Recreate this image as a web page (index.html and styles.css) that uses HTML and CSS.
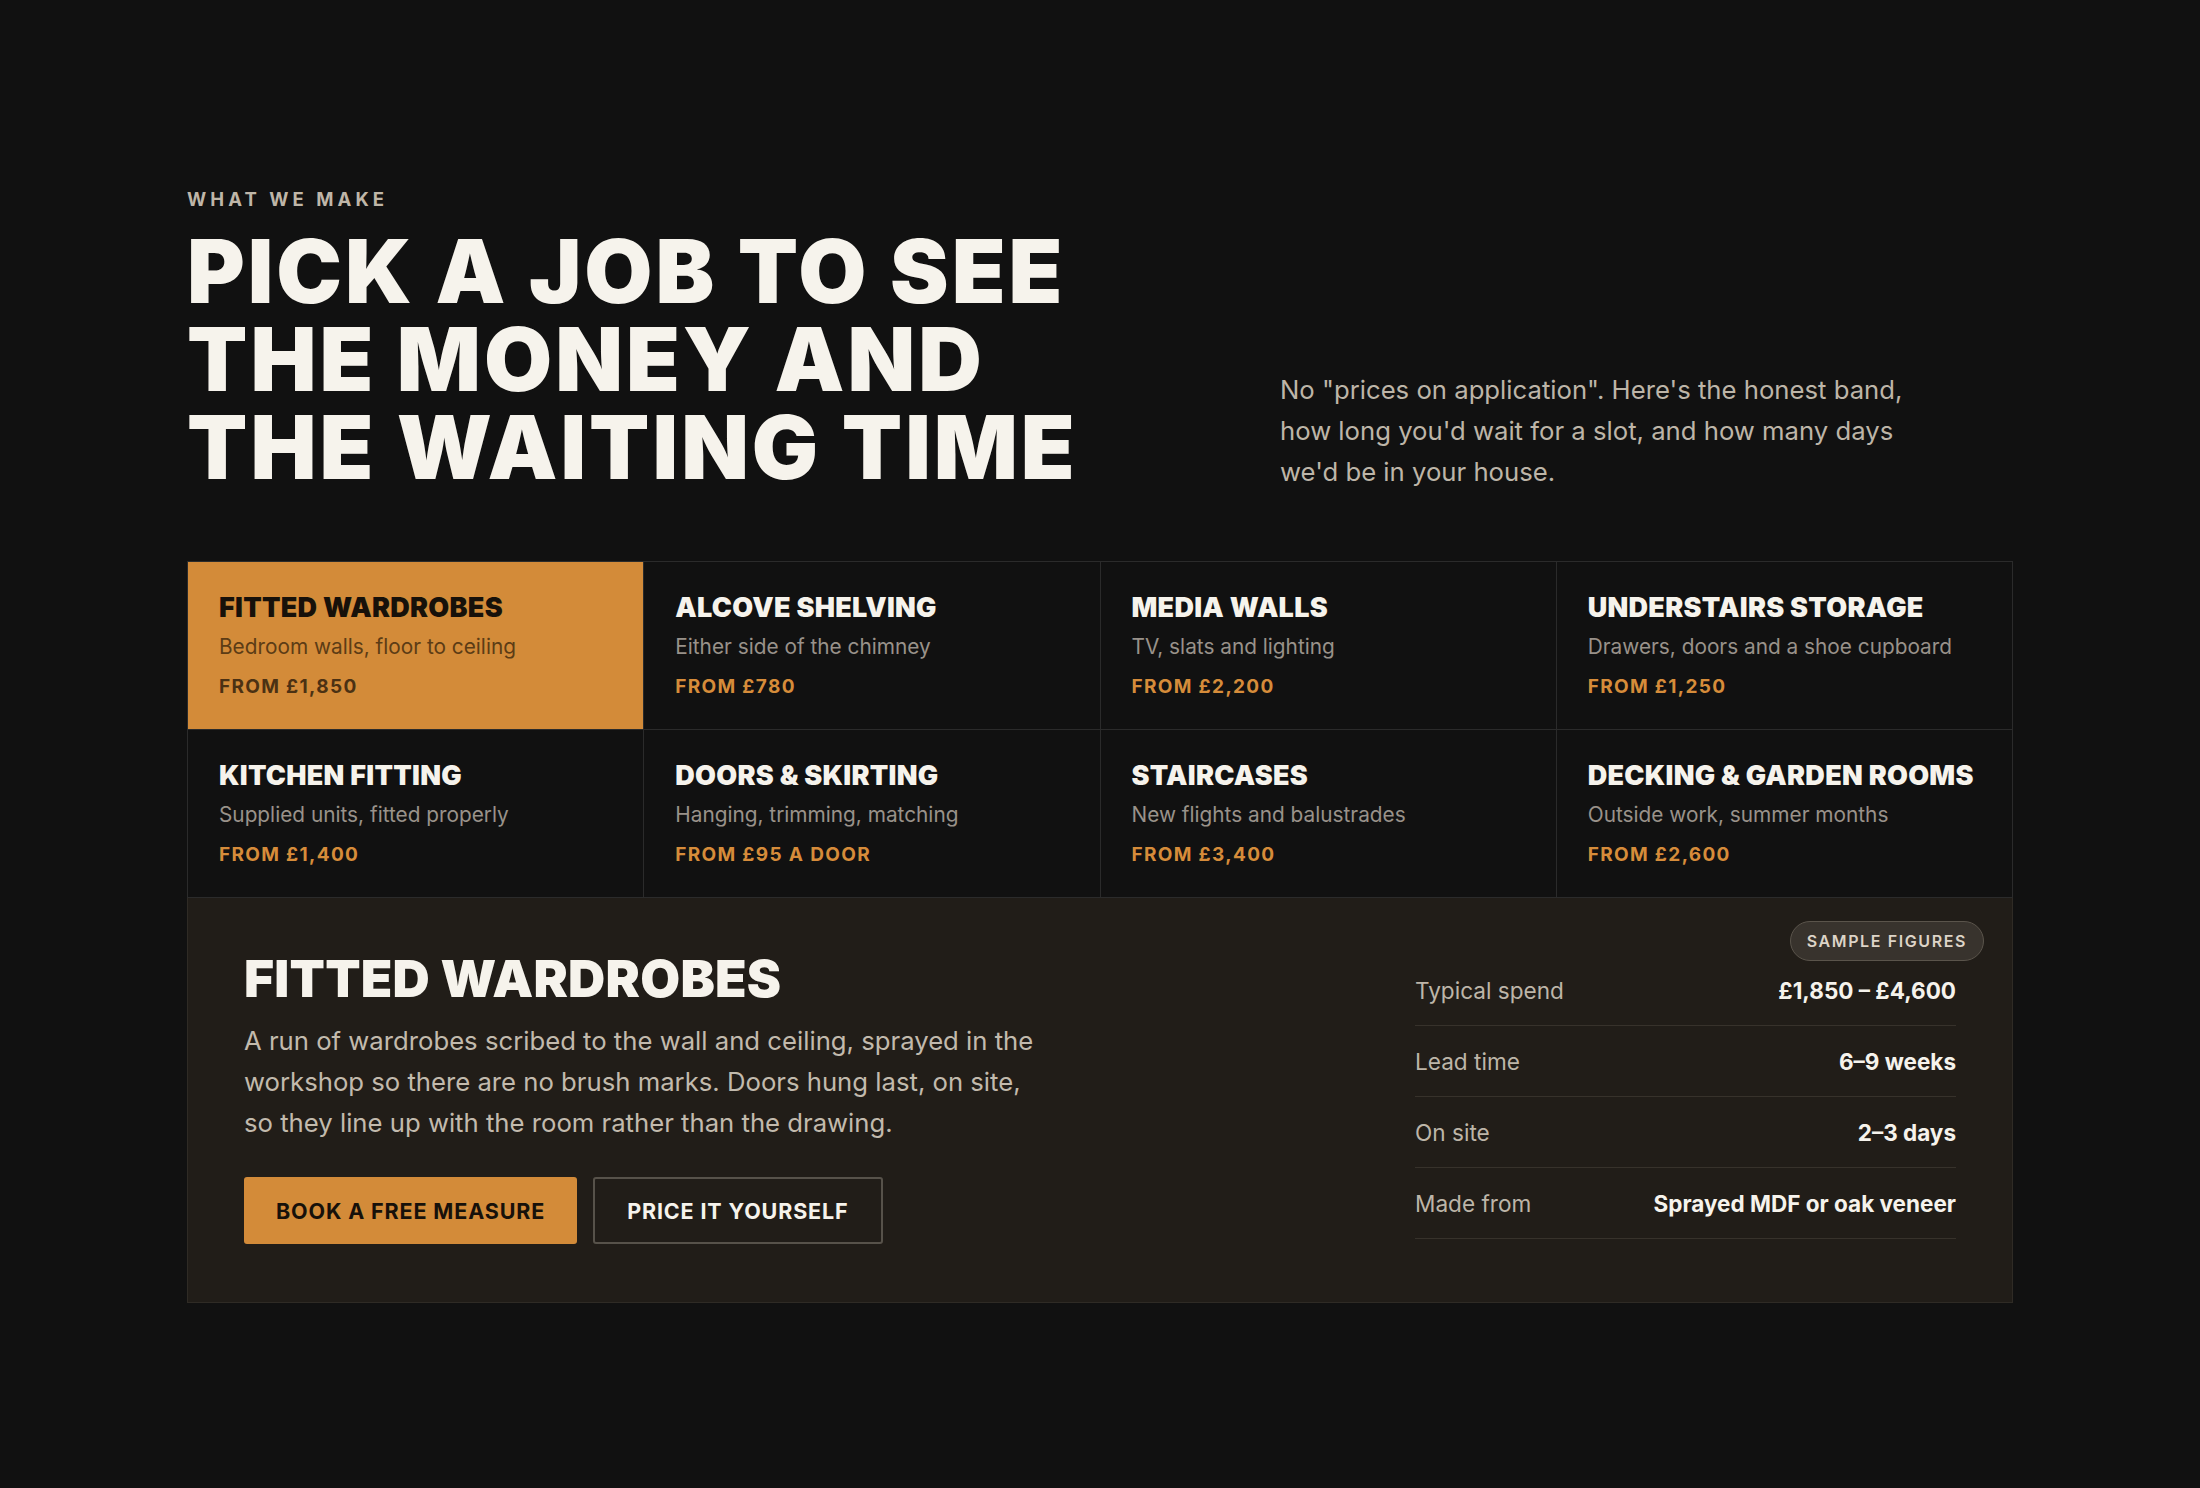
FILE: index.html
```html
<!DOCTYPE html>
<html lang="en">
<head>
<meta charset="utf-8">
<title>What we make</title>
<link rel="stylesheet" href="styles.css">
</head>
<body>
<section class="wrap">
  <div class="intro">
    <div class="intro-left">
      <p class="eyebrow">WHAT WE MAKE</p>
      <h1 class="headline">PICK A JOB TO SEE<br>THE MONEY AND<br>THE WAITING TIME</h1>
    </div>
    <p class="lede">No "prices on application". Here's the honest band, how long you'd wait for a slot, and how many days we'd be in your house.</p>
  </div>

  <div class="jobs">
    <button class="job is-active">
      <span class="job-title">FITTED WARDROBES</span>
      <span class="job-sub">Bedroom walls, floor to ceiling</span>
      <span class="job-price">FROM £1,850</span>
    </button>
    <button class="job">
      <span class="job-title">ALCOVE SHELVING</span>
      <span class="job-sub">Either side of the chimney</span>
      <span class="job-price">FROM £780</span>
    </button>
    <button class="job">
      <span class="job-title">MEDIA WALLS</span>
      <span class="job-sub">TV, slats and lighting</span>
      <span class="job-price">FROM £2,200</span>
    </button>
    <button class="job">
      <span class="job-title">UNDERSTAIRS STORAGE</span>
      <span class="job-sub">Drawers, doors and a shoe cupboard</span>
      <span class="job-price">FROM £1,250</span>
    </button>
    <button class="job">
      <span class="job-title">KITCHEN FITTING</span>
      <span class="job-sub">Supplied units, fitted properly</span>
      <span class="job-price">FROM £1,400</span>
    </button>
    <button class="job">
      <span class="job-title">DOORS &amp; SKIRTING</span>
      <span class="job-sub">Hanging, trimming, matching</span>
      <span class="job-price">FROM £95 A DOOR</span>
    </button>
    <button class="job">
      <span class="job-title">STAIRCASES</span>
      <span class="job-sub">New flights and balustrades</span>
      <span class="job-price">FROM £3,400</span>
    </button>
    <button class="job">
      <span class="job-title">DECKING &amp; GARDEN ROOMS</span>
      <span class="job-sub">Outside work, summer months</span>
      <span class="job-price">FROM £2,600</span>
    </button>
  </div>

  <div class="detail">
    <span class="pill">SAMPLE FIGURES</span>
    <div class="detail-main">
      <h2 class="detail-title">FITTED WARDROBES</h2>
      <p class="detail-text">A run of wardrobes scribed to the wall and ceiling, sprayed in the workshop so there are no brush marks. Doors hung last, on site, so they line up with the room rather than the drawing.</p>
      <div class="actions">
        <a class="btn btn-primary" href="#">BOOK A FREE MEASURE</a>
        <a class="btn btn-ghost" href="#">PRICE IT YOURSELF</a>
      </div>
    </div>
    <dl class="stats">
      <div class="stat"><dt>Typical spend</dt><dd>£1,850 – £4,600</dd></div>
      <div class="stat"><dt>Lead time</dt><dd>6–9 weeks</dd></div>
      <div class="stat"><dt>On site</dt><dd>2–3 days</dd></div>
      <div class="stat"><dt>Made from</dt><dd>Sprayed MDF or oak veneer</dd></div>
    </dl>
  </div>
</section>
</body>
</html>
```

FILE: styles.css
```css
* { box-sizing: border-box; }

html, body {
  margin: 0;
  padding: 0;
  background: #111111;
  color: #f4f1ea;
  font-family: Inter, "Noto Sans", "Liberation Sans", sans-serif;
}

.wrap {
  padding: 188px 187px 120px;
}

.intro {
  display: grid;
  grid-template-columns: 1fr 733px;
  align-items: end;
  margin-bottom: 70px;
}

.eyebrow {
  margin: 0 0 16px;
  font-size: 18.5px;
  line-height: 23px;
  font-weight: 700;
  letter-spacing: 0.22em;
  color: #bfb6a8;
}

.headline {
  margin: 0;
  font-size: 88px;
  line-height: 88px;
  font-weight: 900;
  letter-spacing: 0.034em;
  color: #f6f3ec;
}

.lede {
  margin: 0 0 -1px;
  max-width: 660px;
  font-size: 25.7px;
  line-height: 41px;
  color: #bdb5a8;
}

.jobs {
  display: grid;
  grid-template-columns: repeat(4, 1fr);
  gap: 1px;
  background: #2b2b2b;
  border: 1px solid #2b2b2b;
}

.job {
  display: flex;
  flex-direction: column;
  align-items: flex-start;
  padding: 31px 31px 30px;
  border: 0;
  background: #111111;
  text-align: left;
  font-family: inherit;
  cursor: pointer;
}

.job-title {
  font-size: 27px;
  line-height: 30px;
  font-weight: 900;
  letter-spacing: 0.01em;
  color: #f6f3ec;
}

.job-sub {
  margin-top: 10px;
  font-size: 20.8px;
  line-height: 28px;
  color: #99928a;
}

.job-price {
  margin-top: 14px;
  font-size: 19px;
  line-height: 24px;
  font-weight: 700;
  letter-spacing: 0.07em;
  color: #d68c3a;
}

.job.is-active { background: #d38b39; }
.job.is-active .job-title { color: #17110a; }
.job.is-active .job-sub { color: #5c3c15; }
.job.is-active .job-price { color: #4b3113; }

.detail {
  position: relative;
  display: flex;
  justify-content: space-between;
  padding: 54px 56px 58px;
  background: #211d18;
  border: 1px solid #2f2b25;
  border-top: 0;
}

.pill {
  position: absolute;
  top: 23px;
  right: 28px;
  height: 40px;
  padding: 0 16px;
  display: inline-flex;
  align-items: center;
  border: 1.5px solid #5a544b;
  border-radius: 20px;
  background: #38332d;
  color: #ddd4c7;
  font-size: 16px;
  font-weight: 600;
  letter-spacing: 0.1em;
}

.detail-main {
  width: 800px;
}

.detail-title {
  margin: 0;
  font-size: 51.5px;
  line-height: 53px;
  font-weight: 900;
  letter-spacing: 0.005em;
  color: #f6f3ec;
}

.detail-text {
  margin: 15px 0 0;
  font-size: 25.7px;
  line-height: 41px;
  color: #c2baad;
}

.actions {
  display: flex;
  gap: 16px;
  margin-top: 34px;
}

.btn {
  display: inline-flex;
  align-items: center;
  justify-content: center;
  height: 67px;
  padding: 0 32px;
  border-radius: 3px;
  font-size: 21.5px;
  font-weight: 700;
  letter-spacing: 0.04em;
  text-decoration: none;
}

.btn-primary {
  background: #d38b39;
  color: #17110a;
}

.btn-ghost {
  border: 2px solid #57524a;
  color: #f6f3ec;
}

.stats {
  width: 541px;
  margin: 3px 0 0;
}

.stat {
  display: flex;
  justify-content: space-between;
  align-items: center;
  height: 71px;
  border-bottom: 1px solid #37322b;
}

.stat dt {
  font-size: 22.6px;
  color: #bdb5a8;
}

.stat dd {
  margin: 0;
  font-size: 22.5px;
  font-weight: 700;
  color: #f6f3ec;
}
```
